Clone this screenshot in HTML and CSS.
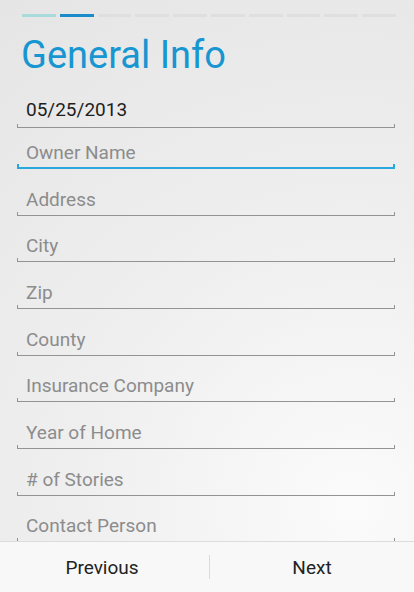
FILE: index.html
```html
<!DOCTYPE html>
<html lang="en">
<head>
    <meta charset="UTF-8">
    <meta name="viewport" content="width=device-width, initial-scale=1.0">
    <title>General Info</title>
    <link rel="stylesheet" href="styles.css">
</head>
<body>
    <div class="screen">
        <!-- pasos del formulario -->
        <div class="steps">
            <span class="step done"></span>
            <span class="step current"></span>
            <span class="step"></span>
            <span class="step"></span>
            <span class="step"></span>
            <span class="step"></span>
            <span class="step"></span>
            <span class="step"></span>
            <span class="step"></span>
            <span class="step"></span>
        </div>

        <h1 class="title">General Info</h1>

        <div class="fields">
            <div class="field field-first"><span class="value">05/25/2013</span></div>
            <div class="field focused"><span class="hint">Owner Name</span></div>
            <div class="field"><span class="hint">Address</span></div>
            <div class="field"><span class="hint">City</span></div>
            <div class="field"><span class="hint">Zip</span></div>
            <div class="field"><span class="hint">County</span></div>
            <div class="field"><span class="hint">Insurance Company</span></div>
            <div class="field"><span class="hint">Year of Home</span></div>
            <div class="field"><span class="hint"># of Stories</span></div>
            <div class="field"><span class="hint">Contact Person</span></div>
        </div>

        <div class="nav">
            <button class="nav-btn prev">Previous</button>
            <span class="nav-sep"></span>
            <button class="nav-btn">Next</button>
        </div>
    </div>
</body>
</html>
```

FILE: styles.css
```css
body {
    margin: 0;
    padding: 0;
    font-family: Roboto, "Noto Sans", sans-serif;
    background: radial-gradient(circle at 85% 85%, #fbfbfb 0%, #efefef 45%, #e5e5e5 100%);
    color: #222;
}

.screen {
    height: 592px;
    display: flex;
    flex-direction: column;
    overflow: hidden;
}

.steps {
    display: flex;
    gap: 4px;
    padding: 14px 18px 0 22px;
}

.step {
    flex: 1;
    height: 3px;
    background-color: #dfdfdf;
}

.step.done {
    background-color: #a9dbdc; /* paso ya hecho */
}

.step.current {
    background-color: #1a8ccb; /* paso actual */
}

.title {
    margin: 14px 0 4px 21px;
    font-size: 38px;
    font-weight: normal;
    color: #1796d1;
    line-height: 48px;
}

.fields {
    flex: 1;
    overflow: hidden;
    padding: 0 19px 0 17px;
}

.field {
    position: relative;
    height: 46.67px;
    display: flex;
    align-items: flex-end;
    padding: 0 0 5px 9px;
    box-sizing: border-box;
    font-size: 19px;
}

.field-first {
    height: 45px;
    padding-bottom: 7px;
}

.field.focused {
    height: 41px;
}

.field::after {
    content: "";
    position: absolute;
    left: 0;
    right: 0;
    bottom: 0;
    height: 3px;
    border: 1px solid #939393;
    border-top: none;
}

.field.focused::after {
    height: 3px;
    border: 2px solid #2aa7dc;
    border-top: none;
}

.value {
    color: #1e1e1e;
}

.hint {
    color: #8c8c8c;
}

.nav {
    height: 50px;
    flex-shrink: 0;
    display: flex;
    align-items: center;
    border-top: 1px solid #dcdcdc;
    background-color: #f8f8f8;
}

.nav-btn {
    flex: 1;
    height: 100%;
    border: none;
    background: none;
    font-family: Roboto, "Noto Sans", sans-serif;
    font-size: 19px;
    color: #222;
    padding: 0;
}

.nav-btn.prev {
    padding-right: 5px;
}

.nav-sep {
    width: 1px;
    height: 24px;
    background-color: #dadada;
}
```
